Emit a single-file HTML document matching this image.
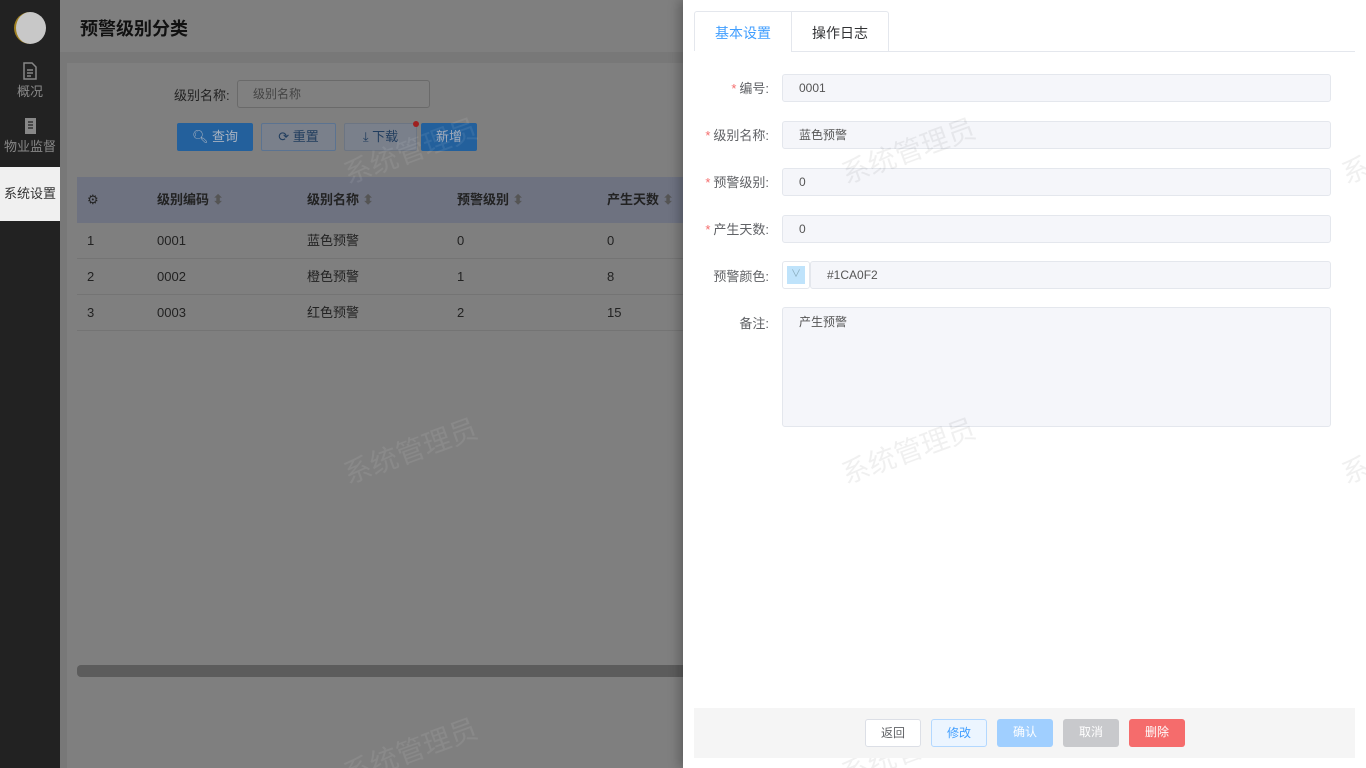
<!DOCTYPE html>
<html><head><meta charset="utf-8"><style>
*{margin:0;padding:0;box-sizing:border-box}
html,body{width:1366px;height:768px;overflow:hidden}
body{position:relative;font-family:"Liberation Sans","Noto Sans CJK SC",sans-serif;font-size:13px;background:#787878}
.abs{position:absolute}
.side{left:0;top:0;width:60px;height:768px;background:#222}
.side .it{position:absolute;left:0;width:60px;text-align:center;color:#888;font-size:13px}
.hdr{left:60px;top:0;width:623px;height:52px;background:#7f7f7f;font-size:18px;font-weight:bold;color:#111;padding:15px 0 0 20px}
.card{left:67px;top:63px;width:616px;height:705px;background:#7f7f7f}
.btn{position:absolute;height:28px;border-radius:2px;font-size:13px;text-align:center;line-height:26px}
.th{left:77px;top:177px;width:606px;height:46px;background:#6e7280}
.tr{position:absolute;left:77px;width:606px;height:36px;border-bottom:1px solid #747474;color:#222;line-height:36px}
.tr span,.th span{position:absolute}
.drawer{left:683px;top:0;width:683px;height:768px;background:#fff;box-shadow:-4px 0 10px rgba(0,0,0,.25);overflow:hidden}
.lbl{position:absolute;right:597px;width:100px;text-align:right;color:#606266;font-size:13px}
.lbl i{color:#f56c6c;font-style:normal;margin-right:3px}
.inp{position:absolute;left:99px;width:549px;height:28px;background:#f5f6fa;border:1px solid #e4e7ed;border-radius:3px;padding-left:16px;line-height:26px;color:#555;font-size:12px}
.wm{position:absolute;font-size:28px;color:rgba(0,0,0,.06);transform:rotate(-20deg);white-space:nowrap}
.fb{position:absolute;top:719px;width:56px;height:28px;border-radius:3px;text-align:center;line-height:26px;font-size:12px}
.main{position:absolute;left:60px;top:0;width:623px;height:768px;overflow:hidden}
</style></head><body>
<div class="abs side">
 <div class="abs" style="left:14px;top:12px;width:32px;height:32px;border-radius:50%;background:#c8c8c8;border-left:2px solid #a08020"></div>
 <div class="it" style="top:62px"><svg width="16" height="18" viewBox="0 0 16 18"><path d="M2 1h8l4 4v12H2z M5 8h6M5 11h6M5 14h4" fill="none" stroke="#888" stroke-width="1.5"/></svg><div style="margin-top:-2px">概况</div></div>
 <div class="it" style="top:117px"><svg width="16" height="18" viewBox="0 0 16 18"><path d="M3 1h11v16H3z" fill="#888"/><path d="M6 5h5M6 8h5M6 11h5" stroke="#222" stroke-width="1.2"/></svg><div style="margin-top:-2px">物业监督</div></div>
 <div class="abs" style="left:0;top:167px;width:60px;height:54px;background:#f0f0f0;color:#333;font-size:13px;line-height:54px;text-align:center">系统设置</div>
</div>
<div class="main">
<div class="abs hdr" style="left:0">预警级别分类</div>
<div class="abs card" style="left:7px"></div>
<div class="abs" style="left:114px;top:85px;color:#222">级别名称:</div>
<div class="abs" style="left:177px;top:80px;width:193px;height:28px;border:1px solid #6a6a6a;border-radius:3px;background:#808080;color:#444;padding-left:15px;line-height:26px;font-size:12px">级别名称</div>
<div class="btn" style="left:117px;top:123px;width:76px;background:#23609c;color:#a8b2c0;line-height:28px">🔍&#xFE0E; 查询</div>
<div class="btn" style="left:201px;top:123px;width:75px;border:1px solid #5b7391;color:#213d5e;background:#7a808b">⟳ 重置</div>
<div class="btn" style="left:284px;top:123px;width:73px;border:1px solid #6c7583;color:#213d5e;background:#7a808b">⤓ 下载</div>
<div class="abs" style="left:353px;top:121px;width:6px;height:6px;border-radius:50%;background:#9e2020"></div>
<div class="btn" style="left:361px;top:123px;width:56px;background:#23609c;color:#a0a8b8;line-height:28px">新增</div>
<div class="abs th" style="left:17px;color:#222;font-weight:bold;line-height:46px">
 <span style="left:10px;font-weight:normal">⚙</span>
 <span style="left:80px">级别编码 <b style="color:#555">⬍</b></span>
 <span style="left:230px">级别名称 <b style="color:#555">⬍</b></span>
 <span style="left:380px">预警级别 <b style="color:#555">⬍</b></span>
 <span style="left:530px">产生天数 <b style="color:#555">⬍</b></span>
</div>
<div class="tr" style="left:17px;top:223px"><span style="left:10px">1</span><span style="left:80px">0001</span><span style="left:230px">蓝色预警</span><span style="left:380px">0</span><span style="left:530px">0</span></div>
<div class="tr" style="left:17px;top:259px"><span style="left:10px">2</span><span style="left:80px">0002</span><span style="left:230px">橙色预警</span><span style="left:380px">1</span><span style="left:530px">8</span></div>
<div class="tr" style="left:17px;top:295px"><span style="left:10px">3</span><span style="left:80px">0003</span><span style="left:230px">红色预警</span><span style="left:380px">2</span><span style="left:530px">15</span></div>
<div class="abs" style="left:17px;top:665px;width:606px;height:12px;background:#5c5c5c;border-radius:4px 0 0 4px"></div>
<div class="wm" style="left:280px;top:130px;color:rgba(255,255,255,.08)">系统管理员</div>
<div class="wm" style="left:280px;top:430px;color:rgba(255,255,255,.08)">系统管理员</div>
<div class="wm" style="left:280px;top:730px;color:rgba(255,255,255,.08)">系统管理员</div>
</div>

<div class="abs drawer">
 <div class="abs" style="left:11px;top:51px;width:661px;height:1px;background:#e4e7ed"></div>
 <div class="abs" style="left:11px;top:11px;width:195px;height:41px;border:1px solid #e4e7ed;border-bottom:none;border-radius:3px 3px 0 0"></div>
 <div class="abs" style="left:108px;top:11px;width:1px;height:41px;background:#e4e7ed"></div>
 <div class="abs" style="left:11px;top:51px;width:97px;height:1px;background:#fff"></div>
 <div class="abs" style="left:32px;top:23px;color:#409eff;font-size:14px">基本设置</div>
 <div class="abs" style="left:129px;top:23px;color:#303133;font-size:14px">操作日志</div>

 <div class="lbl" style="top:78px"><i>*</i>编号:</div><div class="inp" style="top:74px">0001</div>
 <div class="lbl" style="top:125px"><i>*</i>级别名称:</div><div class="inp" style="top:121px">蓝色预警</div>
 <div class="lbl" style="top:172px"><i>*</i>预警级别:</div><div class="inp" style="top:168px">0</div>
 <div class="lbl" style="top:219px"><i>*</i>产生天数:</div><div class="inp" style="top:215px">0</div>
 <div class="lbl" style="top:266px">预警颜色:</div>
 <div class="abs" style="left:99px;top:261px;width:28px;height:28px;border:1px solid #e4e7ed;border-radius:3px;background:#fff"><div style="margin:4px;width:18px;height:18px;background:#bfe3fb;color:#8ab;font-size:10px;text-align:center;line-height:18px">∨</div></div>
 <div class="inp" style="top:261px;left:127px;width:521px;padding-left:16px">#1CA0F2</div>
 <div class="lbl" style="top:313px">备注:</div>
 <div class="inp" style="top:307px;height:120px;line-height:28px;padding-top:0">产生预警</div>

 <div class="wm" style="left:155px;top:130px">系统管理员</div>
 <div class="wm" style="left:155px;top:430px">系统管理员</div>
 <div class="wm" style="left:155px;top:730px">系统管理员</div>
 <div class="wm" style="left:655px;top:130px">系统管理员</div>
 <div class="wm" style="left:655px;top:430px">系统管理员</div>

 <div class="abs" style="left:11px;top:708px;width:661px;height:50px;background:#f5f5f5"></div>
 <div class="fb" style="left:182px;border:1px solid #dcdfe6;background:#fff;color:#606266">返回</div>
 <div class="fb" style="left:248px;border:1px solid #b3d8ff;background:#ecf5ff;color:#409eff">修改</div>
 <div class="fb" style="left:314px;background:#a0cfff;color:#fff">确认</div>
 <div class="fb" style="left:380px;background:#c8c9cc;color:#fff">取消</div>
 <div class="fb" style="left:446px;background:#f56c6c;color:#fff">删除</div>
</div>
</body></html>
